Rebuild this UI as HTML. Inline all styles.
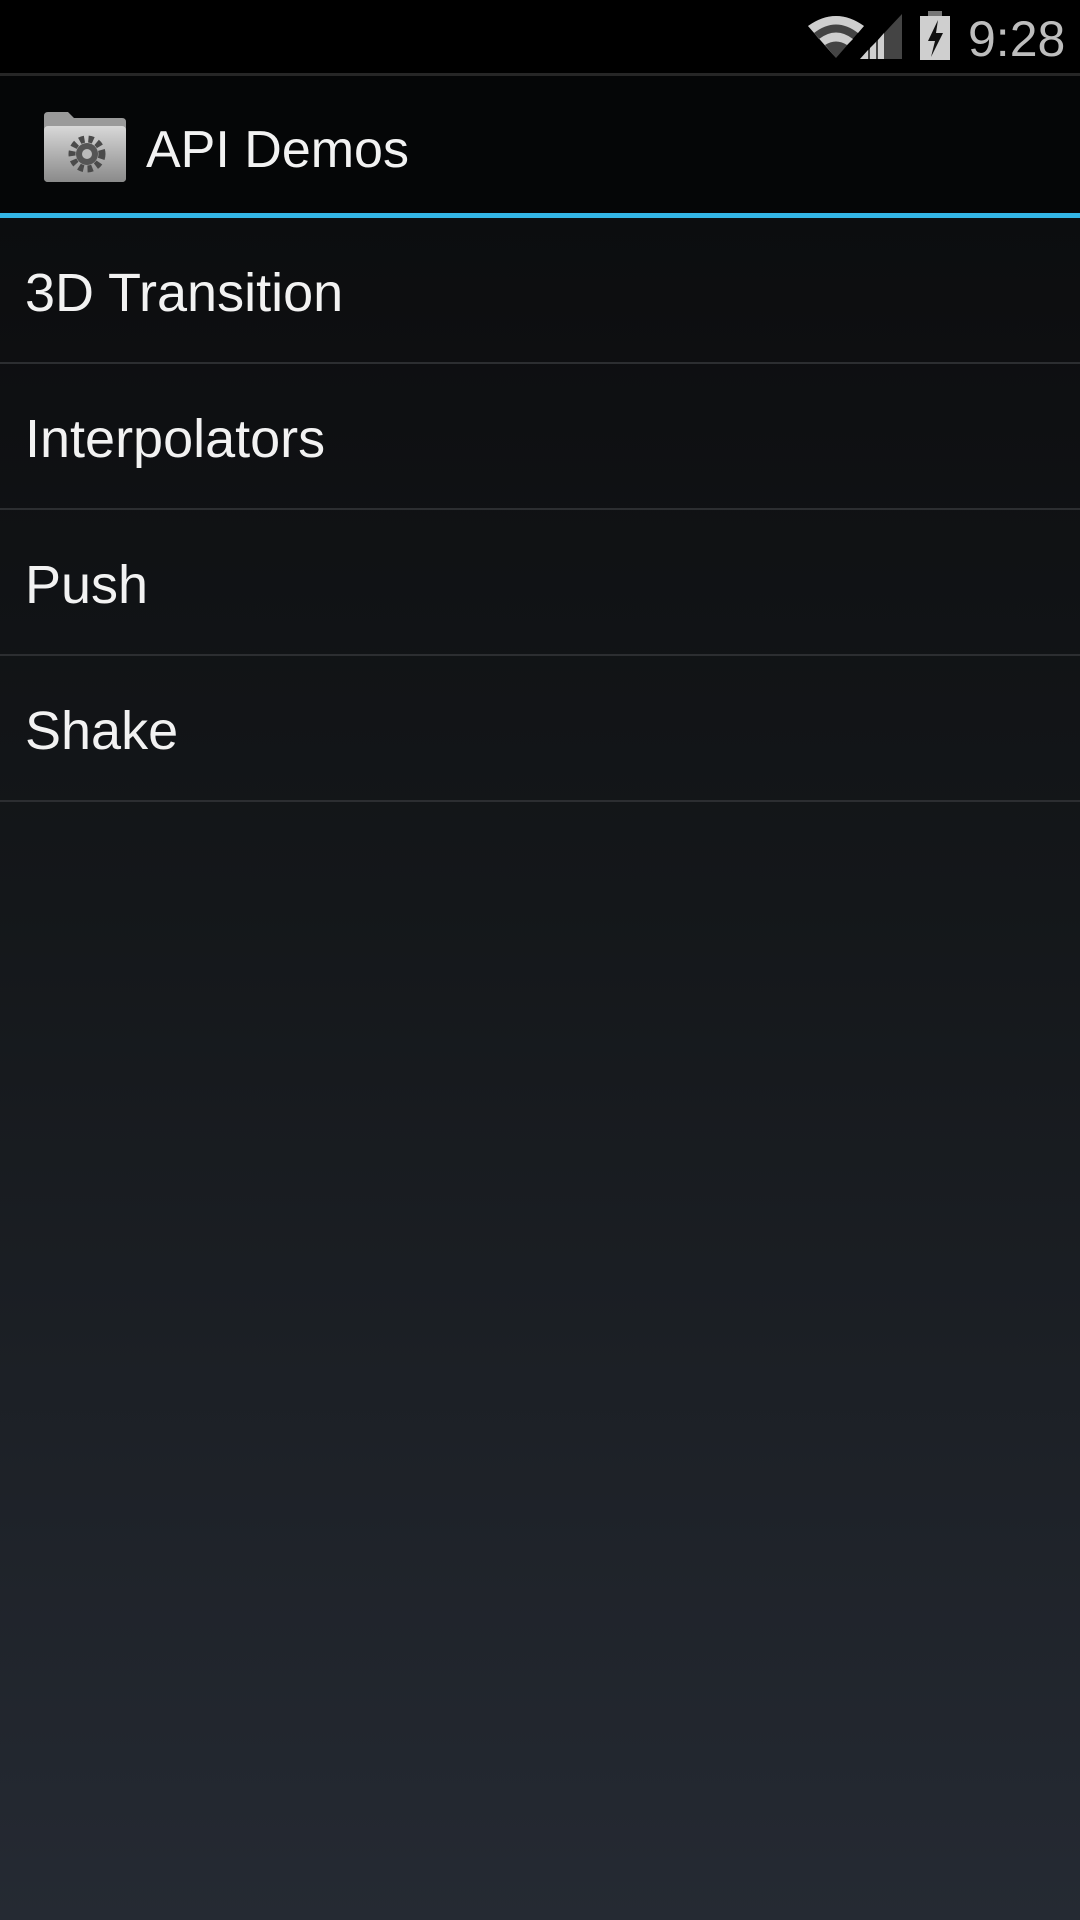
<!DOCTYPE html>
<html><head><style>
*{margin:0;padding:0;box-sizing:border-box}
body{width:1080px;height:1920px;overflow:hidden;font-family:"Liberation Sans",sans-serif;background:linear-gradient(#0c0d0f 218px,#14171a 900px,#252a33 1920px);position:relative}
#sb{position:absolute;left:0;top:0;width:1080px;height:76px;background:#000;border-bottom:3px solid #262626}
#time{position:absolute;left:968px;top:10px;font-size:50px;color:#bdbdbd}
#ab{position:absolute;left:0;top:76px;width:1080px;height:137px;background:#050607}
#blue{position:absolute;left:0;top:213px;width:1080px;height:5px;background:#33b5e5}
#title{position:absolute;left:146px;top:44px;font-size:52px;color:#f2f2f2}
.row{position:absolute;left:0;width:1080px;height:146px;border-bottom:2px solid #2c2e31}
.row span{position:absolute;left:25px;top:44px;font-size:54px;color:#f2f2f2}
</style></head><body>
<div id="sb">
<svg style="position:absolute;left:806px;top:14px" width="60" height="46" viewBox="0 0 60 46">
<path d="M30 44 L2 12 Q30 -8 58 12 Z" fill="#444"/>
<path d="M30 44 L2 12 Q30 -8 58 12 L52 19 Q30 2 8 19 L13 25 Q30 12 47 25 L41 31 Q30 24 19 31 Z" fill="#cfcfcf"/>
</svg>
<svg style="position:absolute;left:860px;top:14px" width="44" height="46" viewBox="0 0 44 46">
<path d="M0 45 L42 0 V45 Z" fill="#444"/>
<path d="M0 45 L8 36 V45 Z M10 34 L16 28 V45 H10 Z M18 26 L24 19 V45 H18 Z" fill="#cfcfcf"/>
</svg>
<svg style="position:absolute;left:918px;top:11px" width="34" height="50" viewBox="0 0 34 50">
<rect x="10" y="0" width="14" height="6" fill="#777"/>
<rect x="2" y="5" width="30" height="44" fill="#cfcfcf"/>
<path d="M20 9 L10 30 H17 L13 46 L25 22 H18 Z" fill="#111"/>
</svg>
<div id="time">9:28</div>
</div>
<div id="ab">
<svg style="position:absolute;left:42px;top:36px" width="86" height="70" viewBox="0 0 86 70">
<defs><linearGradient id="f" x1="0" y1="0" x2="0" y2="1"><stop offset="0" stop-color="#d8d8d8"/><stop offset="1" stop-color="#8a8a8a"/></linearGradient></defs>
<path d="M2 4 Q2 0 6 0 H26 L32 6 H80 Q84 6 84 10 V66 Q84 70 80 70 H6 Q2 70 2 66 Z" fill="#9a9a9a"/>
<rect x="2" y="14" width="82" height="56" rx="4" fill="url(#f)"/>
<circle cx="45" cy="42" r="15" fill="none" stroke="#4a4a4a" stroke-width="7" stroke-dasharray="5 4"/>
<circle cx="45" cy="42" r="11" fill="#555"/><circle cx="45" cy="42" r="5" fill="#bbb"/>
</svg>
<div id="title">API Demos</div>
</div>
<div id="blue"></div>
<div class="row" style="top:218px"><span>3D Transition</span></div>
<div class="row" style="top:364px"><span>Interpolators</span></div>
<div class="row" style="top:510px"><span>Push</span></div>
<div class="row" style="top:656px"><span>Shake</span></div>
</body></html>
